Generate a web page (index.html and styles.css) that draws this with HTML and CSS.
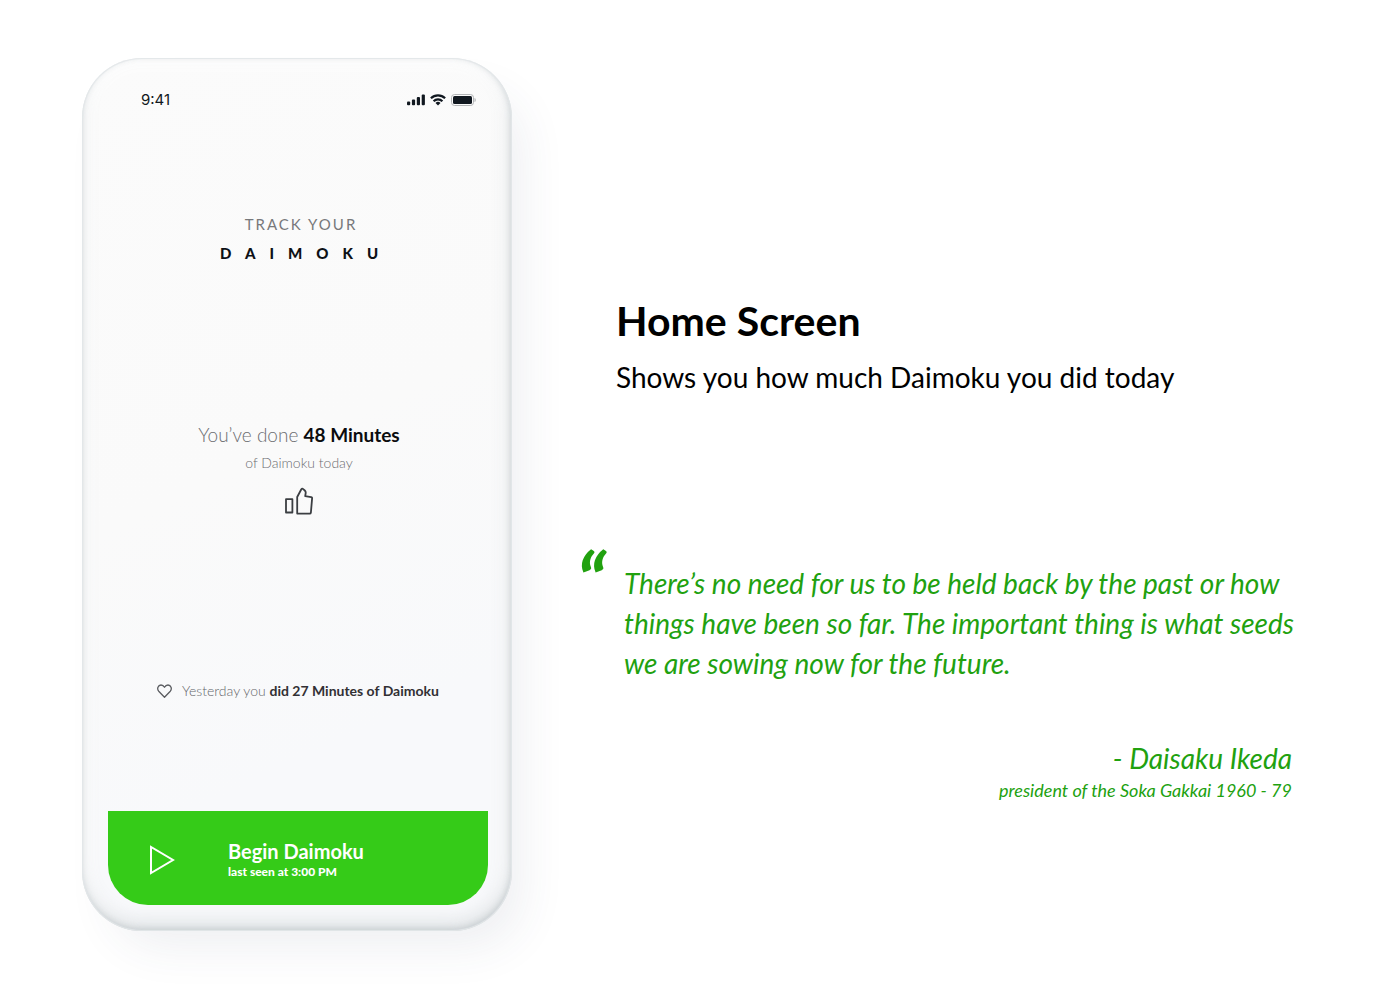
FILE: index.html
```html
<!DOCTYPE html>
<html lang="en">
<head>
<meta charset="utf-8">
<meta name="viewport" content="width=device-width, initial-scale=1">
<title>Track Your Daimoku</title>
<link rel="stylesheet" href="styles.css">
</head>
<body>
<main class="page">
  <section class="phone" aria-label="App home screen">
    <div class="status">
      <span>9:41</span>
      <span class="status-icons">
        <svg width="18" height="12" viewBox="0 0 18 12" fill="#111820" aria-hidden="true">
          <rect x="0" y="7.500" width="3.200" height="3.800" rx="1"/>
          <rect x="4.900" y="5.500" width="3.200" height="5.800" rx="1"/>
          <rect x="9.800" y="3" width="3.200" height="8.300" rx="1"/>
          <rect x="14.700" y=".5" width="3.200" height="10.800" rx="1"/>
        </svg>
        <svg width="16" height="12" viewBox="0 0 16 12" fill="none" stroke="#111820" stroke-width="2.2" aria-hidden="true">
          <path d="M.9 4.2a10.2 10.2 0 0 1 14.2 0"/>
          <path d="M3.6 7.2a6.2 6.2 0 0 1 8.8 0"/>
          <path d="M8 11.600 5.500 9.100a3.500 3.500 0 0 1 5 0z" fill="#111820" stroke="none"/>
        </svg>
        <svg width="25" height="12" viewBox="0 0 25 12" aria-hidden="true">
          <rect x=".5" y=".5" width="22" height="11" rx="3" fill="none" stroke="#b3b5b7"/>
          <rect x="2" y="2" width="19" height="8" rx="1.5" fill="#111820"/>
          <path d="M23.5 4v4c1-.4 1.300-1.200 1.300-2s-.3-1.600-1.300-2z" fill="#b3b5b7"/>
        </svg>
      </span>
    </div>

    <header class="brand">
      <span class="brand-top">TRACK YOUR</span>
      <span class="brand-name">DAIMOKU</span>
    </header>

    <div class="today">
      <p class="today-main">You’ve done <strong>48 Minutes</strong></p>
      <p class="today-sub">of Daimoku today</p>
      <svg class="thumb" width="28" height="28" viewBox="0 0 28 28" fill="none" stroke="#3b3e42" stroke-width="1.8" stroke-linejoin="round" aria-hidden="true">
        <path d="M1 12.200h6.400v13.300H1z"/>
        <path d="M12.200 26.500V10l4-7.500c.5-.9 1.300-1 2-.4l1.600 1.400c.8.700 1 1.500.9 2.500l-.5 3.200 6 .9c.7.1 1 .6.9 1.300l-1.200 14.100c-.1.700-.5 1.100-1.200 1.100z"/>
      </svg>
    </div>

    <p class="yesterday">
      <svg width="15" height="14" viewBox="0 0 15 14" fill="none" stroke="#5a5c60" stroke-width="1.3" stroke-linejoin="round" aria-hidden="true">
        <path d="M7.500 13.200 1.700 7.200C-.3 4.800 1 1 4 1c1.600 0 2.700.8 3.500 2.200C8.300 1.800 9.400 1 11 1c3 0 4.300 3.800 2.300 6.200z"/>
      </svg>
      <span>Yesterday you <strong>did 27 Minutes of Daimoku</strong></span>
    </p>

    <button class="begin" type="button">
      <svg width="26" height="30" viewBox="0 0 26 30" fill="none" stroke="#fff" stroke-width="2" aria-hidden="true">
        <path d="M2 2v26L24 15z"/>
      </svg>
      <span class="begin-text">
        <span class="begin-title">Begin Daimoku</span>
        <span class="begin-sub">last seen at 3:00 PM</span>
      </span>
    </button>
  </section>

  <section class="info">
    <h1 class="title">Home Screen</h1>
    <p class="subtitle">Shows you how much Daimoku you did today</p>
    <figure class="quote">
      <span class="quote-mark" aria-hidden="true">“</span>
      <blockquote class="quote-text">There’s no need for us to be held back by the past or how things have been so far. The important thing is what seeds we are sowing now for the future.</blockquote>
      <figcaption class="author">
        <span class="author-name">- Daisaku Ikeda</span>
        <span class="author-role">president of the Soka Gakkai 1960 - 79</span>
      </figcaption>
    </figure>
  </section>
</main>
</body>
</html>
```

FILE: styles.css
```css
* {
  box-sizing: border-box;
}

body {
  margin: 0;
  background: #fff;
  color: #000;
  font-family: Lato, "Liberation Sans", sans-serif;
}

p,
h1,
figure,
blockquote {
  margin: 0;
}

.page {
  display: flex;
  align-items: flex-start;
  gap: 64px;
  padding: 58px 90px 58px 82px;
}

.phone {
  display: flex;
  flex: 0 0 430px;
  flex-direction: column;
  padding: 32px 24px 26px 26px;
  border-radius: 60px;
  background: linear-gradient(155deg, #fbfbfb 0%, #fafafa 45%, #f8f9fb 75%, #f8f9fb 100%);
  box-shadow:
    inset 0 0 1px 1px #e3e7e9,
    inset -1px -2px 6px rgba(125, 138, 145, 0.3),
    inset -2px -8px 18px rgba(140, 152, 158, 0.3),
    inset 0 0 14px 8px #fff,
    20px 26px 48px -12px rgba(60, 70, 100, 0.09);
}

.status {
  display: flex;
  align-items: center;
  justify-content: space-between;
  padding: 0 12px 0 33px;
  color: #111820;
  font: 15px/20px Inter, "Liberation Sans", sans-serif;
}

.status-icons {
  display: flex;
  gap: 5px;
}

.brand {
  display: flex;
  flex-direction: column;
  align-items: center;
  gap: 9px;
  margin-top: 104px;
  line-height: 20px;
}

.brand-top {
  padding-left: 6px;
  color: #77787b;
  font-size: 15px;
  letter-spacing: 2px;
}

.brand-name {
  padding-left: 16px;
  color: #0d1116;
  font-size: 15px;
  font-weight: 900;
  letter-spacing: 14px;
}

.today {
  display: flex;
  flex-direction: column;
  align-items: center;
  margin-top: 160px;
  padding-left: 2px;
  color: #6c6d71;
  font-weight: 300;
}

.today-main {
  font-size: 19px;
  line-height: 24px;
}

.today-main strong {
  color: #0b0c0e;
  font-weight: 700;
}

.today-sub {
  margin-top: 6px;
  font-size: 14px;
  line-height: 20px;
}

.thumb {
  margin-top: 14px;
}

.yesterday {
  display: flex;
  align-items: center;
  justify-content: center;
  gap: 10px;
  margin-top: 166px;
  color: #66676b;
  font-size: 14px;
  font-weight: 300;
  line-height: 20px;
}

.yesterday strong {
  color: #323034;
  font-weight: 700;
}

.begin {
  display: flex;
  align-items: center;
  gap: 53px;
  min-height: 94px;
  margin-top: 110px;
  padding: 4px 41px 0;
  border: 0;
  border-radius: 0 0 40px 40px;
  background: #35cb18;
  color: #fff;
  font-family: inherit;
  text-align: left;
}

.begin-text {
  display: flex;
  flex-direction: column;
}

.begin-title {
  font-size: 20px;
  font-weight: 700;
  line-height: 24px;
}

.begin-sub {
  font-size: 12px;
  font-weight: 900;
  line-height: 18px;
}

.info {
  flex: 1;
  min-width: 0;
  padding-top: 237px;
}

.title {
  padding-left: 40px;
  font-size: 41px;
  font-weight: 700;
  line-height: 52px;
}

.subtitle {
  padding-left: 40px;
  margin-top: 10px;
  font-size: 28px;
  line-height: 40px;
}

.quote {
  display: grid;
  grid-template-columns: 48px 1fr;
  margin-top: 146px;
  color: #21a10f;
  font-style: italic;
}

.quote-mark {
  height: 60px;
  font-size: 80px;
  font-weight: 700;
  line-height: 76px;
}

.quote-text {
  padding-top: 20px;
  font-size: 28px;
  line-height: 40px;
}

.author {
  display: flex;
  grid-column: 2;
  flex-direction: column;
  margin-top: 55px;
  padding-right: 18px;
  text-align: right;
}

.author-name {
  font-size: 28px;
  line-height: 40px;
}

.author-role {
  font-size: 18px;
  line-height: 24px;
}
```
